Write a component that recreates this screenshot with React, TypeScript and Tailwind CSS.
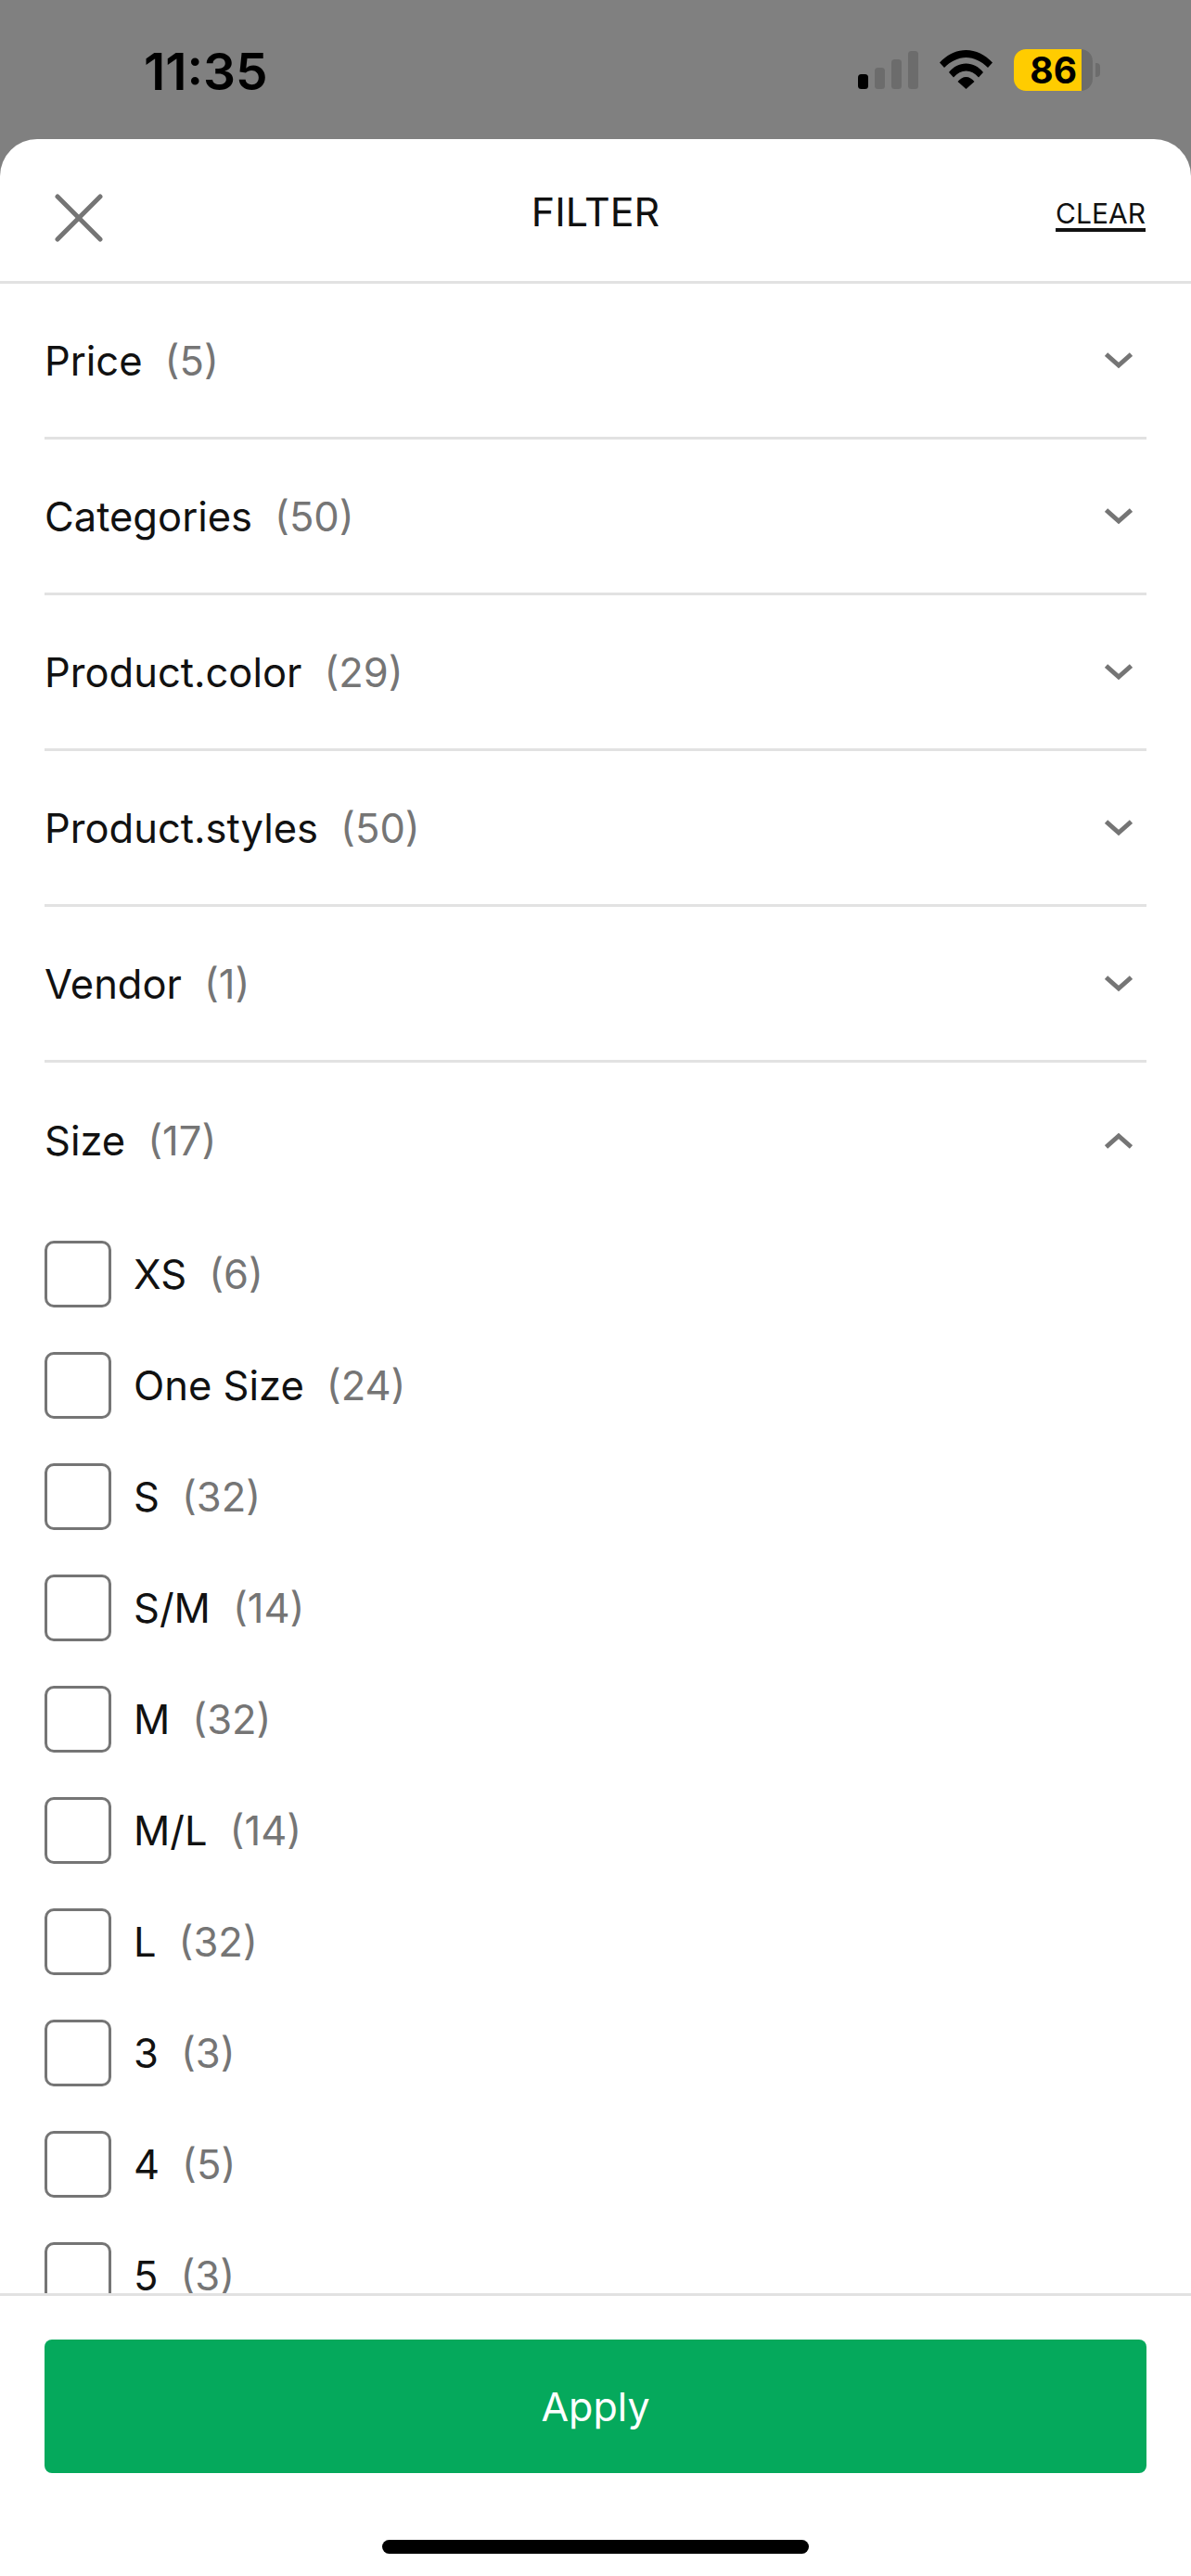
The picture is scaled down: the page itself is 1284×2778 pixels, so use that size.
import { FC } from "react";

const sections = [
  { name: "Price", count: 5 },
  { name: "Categories", count: 50 },
  { name: "Product.color", count: 29 },
  { name: "Product.styles", count: 50 },
  { name: "Vendor", count: 1 },
];

const sizes = [
  { name: "XS", count: 6 },
  { name: "One Size", count: 24 },
  { name: "S", count: 32 },
  { name: "S/M", count: 14 },
  { name: "M", count: 32 },
  { name: "M/L", count: 14 },
  { name: "L", count: 32 },
  { name: "3", count: 3 },
  { name: "4", count: 5 },
  { name: "5", count: 3 },
];

const Chevron: FC<{ up?: boolean }> = ({ up }) => (
  <svg width="30" height="18" viewBox="0 0 30 18" className="mr-[15px] shrink-0">
    <polyline
      points={up ? "1.5,16 15,4 28.5,16" : "1.5,2 15,14 28.5,2"}
      fill="none"
      stroke="#757575"
      strokeWidth="5"
    />
  </svg>
);

const Label: FC<{ name: string; count: number }> = ({ name, count }) => (
  <span className="flex gap-[24px] text-[43.5px] leading-[56px] whitespace-nowrap">
    <span className="text-[#111111]">{name}</span>
    <span className="text-[#757575]">({count})</span>
  </span>
);

const StatusBar: FC = () => (
  <div className="flex h-[150px] items-start justify-between bg-[#808080] pl-[155px] pr-[98px]">
    <span className="mt-[45px] text-[55px] leading-[64px] font-semibold text-black">11:35</span>
    <div className="mt-[53px] flex items-start">
      <svg width="65" height="41" viewBox="0 0 65 41" className="mt-[2px]">
        <rect x="0" y="25" width="11" height="16" rx="3.5" fill="#000000" />
        <rect x="18" y="18" width="11" height="23" rx="3.5" fill="#6c6c6c" />
        <rect x="36" y="9" width="11" height="32" rx="3.5" fill="#6c6c6c" />
        <rect x="54" y="0" width="11" height="41" rx="3.5" fill="#6c6c6c" />
      </svg>
      <svg width="57" height="42" viewBox="0 0 57 42" className="ml-[23px] mt-[1px]">
        <path d="M0 13.5C8 5 18 0 28.5 0C39 0 49 5 57 13.5L52 19C45 12 37 8 28.5 8C20 8 12 12 5 19Z" />
        <path d="M10 24C15 18 21 14.5 28.5 14.5C36 14.5 42 18 47 24L42 29.5C38 25 33.5 22.5 28.5 22.5C23.5 22.5 19 25 15 29.5Z" />
        <path d="M19.5 34C22 31 25 29 28.5 29C32 29 35 31 37.5 34L28.5 42Z" />
      </svg>
      <div className="ml-[23px] flex h-[45px] w-[85px] overflow-hidden rounded-[13px] bg-[#6c6c6c]">
        <div className="flex w-[73px] items-center justify-end bg-[#ffcc00] pr-[5px] text-[39px] leading-none font-bold text-black">
          86
        </div>
      </div>
      <div className="mt-[15px] ml-[3px] h-[15px] w-[5px] rounded-r-[4px] bg-[#6c6c6c]" />
    </div>
  </div>
);

const Header: FC = () => (
  <div className="grid h-[156px] shrink-0 grid-cols-3 items-start border-b-[3px] border-[#e2e2e2] pr-[49px] pl-[59px]">
    <svg width="52" height="52" viewBox="0 0 52 52" className="mt-[59px]">
      <path d="M3 3L49 49M49 3L3 49" stroke="#757575" strokeWidth="5" strokeLinecap="round" />
    </svg>
    <span className="mt-[49px] pr-[10px] text-center text-[43px] leading-[58px] text-[#111111]">
      FILTER
    </span>
    <span className="mt-[62px] text-right text-[30px] leading-[36px] text-[#111111] underline decoration-[4px] underline-offset-[5px]">
      CLEAR
    </span>
  </div>
);

const FilterList: FC = () => (
  <div className="min-h-0 flex-1 overflow-hidden px-[48px]">
    {sections.map((section) => (
      <div
        key={section.name}
        className="flex h-[168px] items-center justify-between border-b-[3px] border-[#e2e2e2]"
      >
        <Label name={section.name} count={section.count} />
        <Chevron />
      </div>
    ))}
    <div className="flex h-[168px] items-center justify-between">
      <Label name="Size" count={17} />
      <Chevron up />
    </div>
    <div className="mt-[24px] flex flex-col gap-[48px]">
      {sizes.map((size) => (
        <div key={size.name} className="flex h-[72px] items-center gap-[24px]">
          <span className="h-[72px] w-[72px] shrink-0 rounded-[10px] border-[3px] border-[#757575]" />
          <Label name={size.name} count={size.count} />
        </div>
      ))}
    </div>
  </div>
);

const Footer: FC = () => (
  <div className="flex h-[305px] shrink-0 flex-col items-center border-t-[3px] border-[#e2e2e2] px-[48px] pt-[47px]">
    <button className="h-[144px] w-full rounded-[8px] bg-[#05a95c] text-[43px] text-white">
      Apply
    </button>
    <div className="mt-[72px] h-[15px] w-[460px] rounded-full bg-black" />
  </div>
);

const App: FC = () => {
  return (
    <div className="flex h-[2778px] w-[1284px] flex-col overflow-hidden bg-[#808080] font-[Inter,sans-serif]">
      <StatusBar />
      <div className="flex min-h-0 flex-1 flex-col rounded-t-[40px] bg-white">
        <Header />
        <FilterList />
        <Footer />
      </div>
    </div>
  );
};

export default App;
